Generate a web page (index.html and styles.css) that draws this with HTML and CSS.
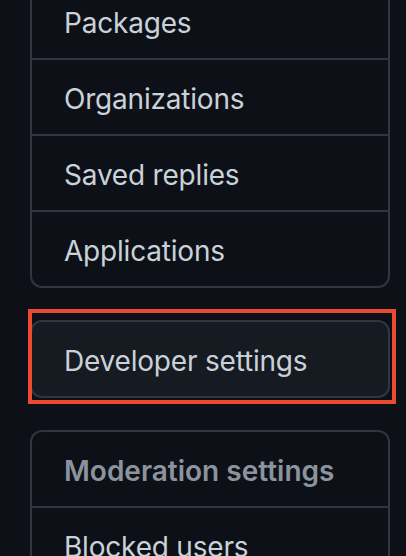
FILE: index.html
```html
<!DOCTYPE html>
<html lang="en">
<head>
<meta charset="utf-8">
<title>Settings menu</title>
<link rel="stylesheet" href="styles.css">
</head>
<body>
<nav class="sidebar">
  <div class="card card-top">
    <a class="item">Packages</a>
    <a class="item">Organizations</a>
    <a class="item">Saved replies</a>
    <a class="item">Applications</a>
  </div>
  <div class="card card-dev">
    <a class="item">Developer settings</a>
    <span class="highlight"></span>
  </div>
  <div class="card">
    <div class="item heading">Moderation settings</div>
    <a class="item">Blocked users</a>
  </div>
</nav>
</body>
</html>
```
FILE: styles.css
```css
html, body {
  margin: 0;
  padding: 0;
  background: #0d1117;
  height: 100%;
  overflow: hidden;
}
body {
  font-family: Inter, "Noto Sans", "Liberation Sans", sans-serif;
  color: #c9d1d9;
}
.sidebar {
  width: 360px;
  padding-left: 30px;
  display: flex;
  flex-direction: column;
  gap: 32px;
}
.card {
  position: relative;
  border: 2px solid #30363d;
  border-radius: 12px;
  display: flex;
  flex-direction: column;
}
.card-top {
  margin-top: -18px;
}
.card-dev {
  background: #161b22;
}
.item {
  display: block;
  padding: 18px 32px 14px;
  font-size: 28px;
  line-height: 42px;
  height: 42px;
  box-sizing: content-box;
  color: #c9d1d9;
  text-decoration: none;
  letter-spacing: -0.2px;
  white-space: nowrap;
}
.item + .item {
  border-top: 2px solid #30363d;
}
.heading {
  font-weight: 600;
  color: #8b949e;
  letter-spacing: 0;
}
.highlight {
  position: absolute;
  top: -13px;
  left: -4px;
  right: -8px;
  bottom: -8px;
  border: 4px solid #ea4a2f;
  pointer-events: none;
}
```
